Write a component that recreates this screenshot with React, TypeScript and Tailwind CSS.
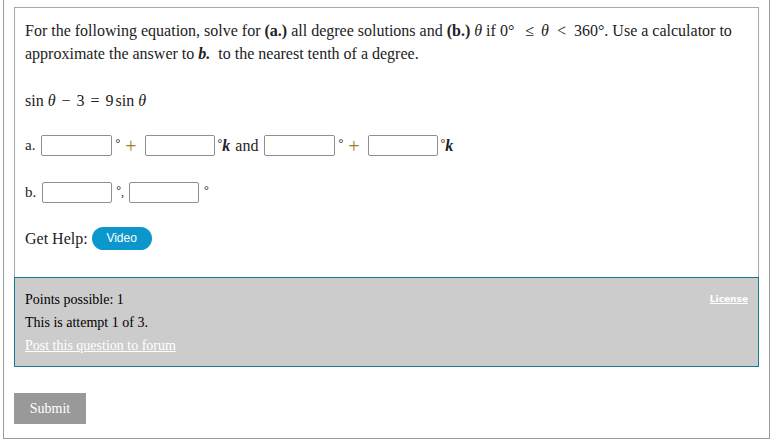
import React from "react";

const serif = { fontFamily: '"Liberation Serif", "Times New Roman", serif' };

function Box({ w = 71 }: { w?: number }) {
  return (
    <input
      type="text"
      className="h-[21px] shrink-0 rounded-[2px] border border-[#8f8f8f] bg-white outline-none"
      style={{ width: w }}
    />
  );
}

function Deg({ cls = "" }: { cls?: string }) {
  return <span className={"self-start text-[12px] leading-[18px] " + cls}>°</span>;
}

export default function App() {
  return (
    <div className="min-h-[447px] bg-white text-[#222]" style={serif}>
      <div className="ml-[3px] w-[767px] border-x border-b border-[#9a9a9a] px-[10px] pt-[7px] pb-[14px]">
        <div className="border border-b-0 border-[#a8a8a8] px-[10px] pt-[11px] pb-[27px] text-[16px] leading-[23px]">
          <p>
            For the following equation, solve for <b>(a.)</b> all degree solutions and <b>(b.)</b>{" "}
            <i>θ</i> if 0°<span className="ml-[11px] mr-[3px]">≤</span> <i>θ</i>
            <span className="mx-[8px]">&lt;</span>360°. Use a calculator to approximate the answer to{" "}
            <i className="font-bold">b.</i>&nbsp; to the nearest tenth of a degree.
          </p>
          <p className="mt-[24px]">
            sin <i>θ</i>
            <span className="mx-[6px]">−</span>3<span className="mx-[6px]">=</span>9<span className="ml-[2px]">sin</span>{" "}
            <i>θ</i>
          </p>
          <div className="mt-[22px] flex h-[23px] items-center">
            <span className="mr-[6px] text-[15px]">a.</span>
            <Box />
            <Deg cls="ml-[3px]" />
            <span className="ml-[5px] mr-[8px] text-[#a57a2e] text-[20px] leading-[20px]">+</span>
            <Box w={70} />
            <Deg cls="ml-[3px]" />
            <i className="font-bold text-[16px]">k</i>
            <span className="ml-[5px] mr-[6px]">and</span>
            <Box />
            <Deg cls="ml-[3px]" />
            <span className="ml-[5px] mr-[8px] text-[#a57a2e] text-[20px] leading-[20px]">+</span>
            <Box w={70} />
            <Deg cls="ml-[3px]" />
            <i className="font-bold text-[16px]">k</i>
          </div>
          <div className="mt-[24px] flex h-[23px] items-center">
            <span className="mr-[6px] text-[15px]">b.</span>
            <Box w={70} />
            <Deg cls="ml-[4px]" />
            <span className="mr-[5px] text-[12px]">,</span>
            <Box w={70} />
            <Deg cls="ml-[5px]" />
          </div>
          <div className="mt-[23px] flex h-[23px] items-center">
            <span className="mr-[4px]">Get Help:</span>
            <span
              className="flex h-[23px] w-[60px] items-center justify-center rounded-full bg-[#0b97cc] text-[12px] text-white"
              style={{ fontFamily: '"Liberation Sans", Arial, sans-serif' }}
            >
              Video
            </span>
          </div>
        </div>
        <div className="flex border border-[#147c90] bg-[#cccccc] px-[10px] pt-[10px] pb-[9px] text-[14px] leading-[23px] text-black">
          <div className="flex-1">
            <div>Points possible: 1</div>
            <div>This is attempt 1 of 3.</div>
            <a className="text-white underline">Post this question to forum</a>
          </div>
          <a
            className="text-[9px] font-bold text-white underline"
            style={{ fontFamily: '"DejaVu Sans", Verdana, sans-serif' }}
          >
            License
          </a>
        </div>
        <button className="mt-[26px] h-[31px] w-[72px] bg-[#999999] text-[14px] text-white" style={serif}>
          Submit
        </button>
      </div>
    </div>
  );
}
